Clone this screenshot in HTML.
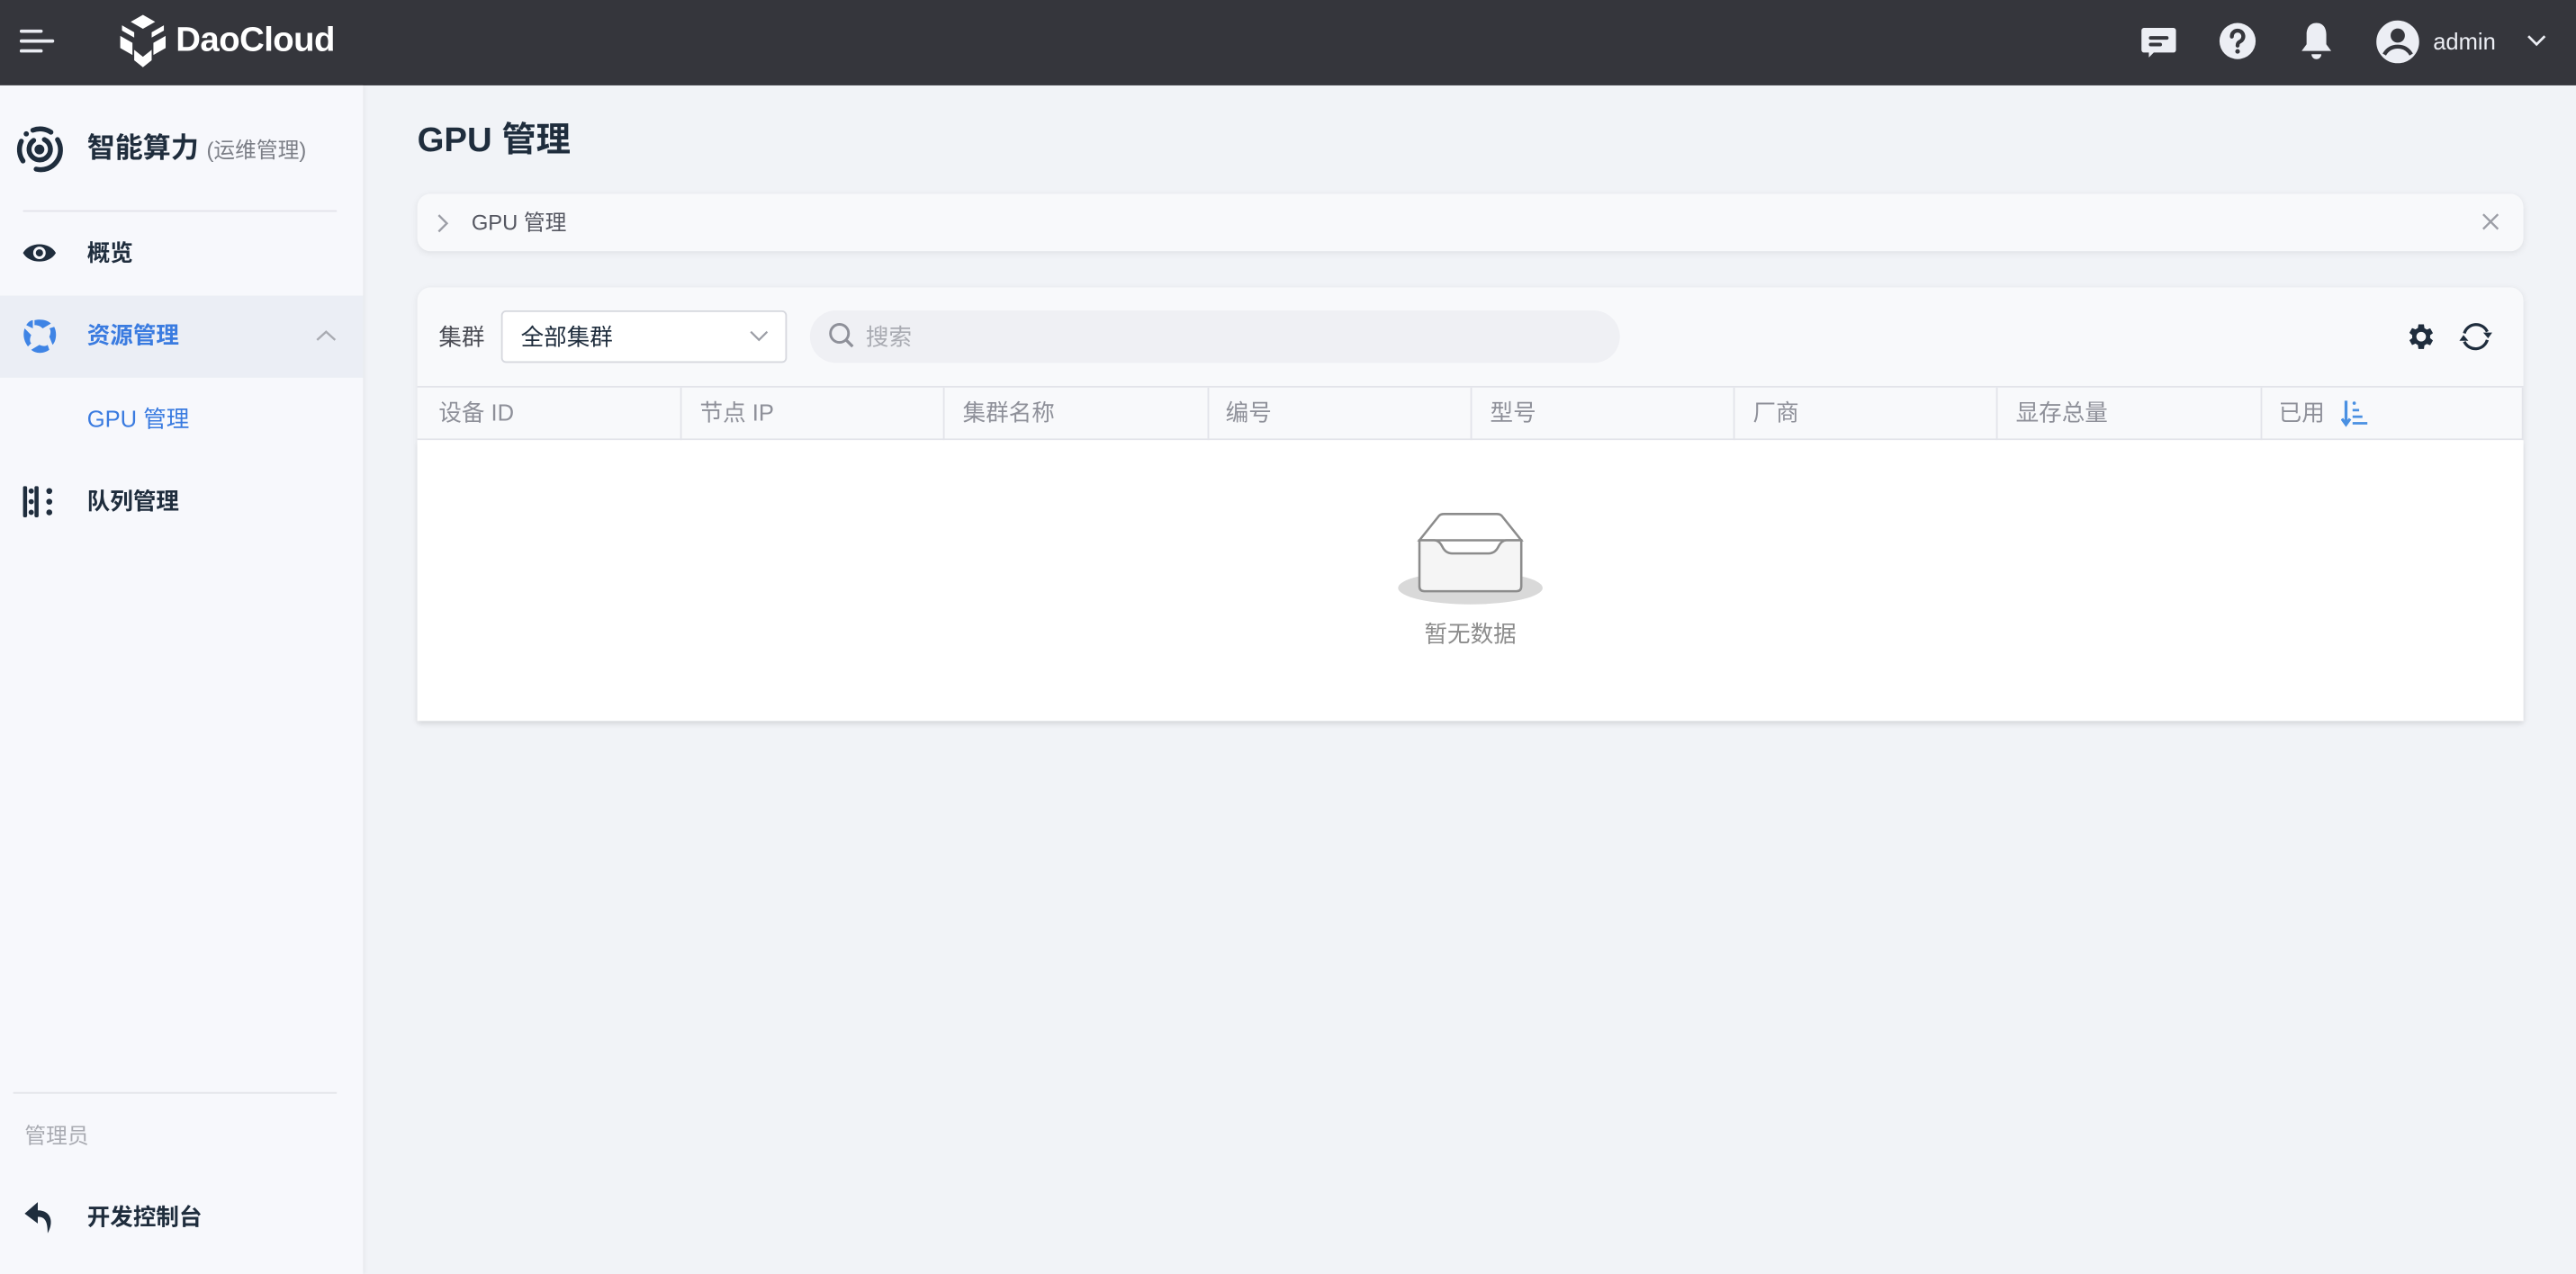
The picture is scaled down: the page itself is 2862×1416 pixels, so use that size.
<!DOCTYPE html>
<html><head><meta charset="utf-8"><style>
*{box-sizing:border-box;margin:0;padding:0}
html,body{width:2862px;height:1416px;overflow:hidden;background:#f1f3f7}
#w{width:1568px;height:776px;transform:scale(1.82526);transform-origin:0 0;position:relative;font-family:"Liberation Sans","Noto Sans CJK SC",sans-serif;background:#f1f3f7}
.a{position:absolute}
.hd{left:0;top:0;width:1568px;height:52px;background:#35363c}
.sb{left:0;top:52px;width:221px;height:724px;background:#f7f8fc;box-shadow:1px 0 3px rgba(0,0,0,.06)}
.t{white-space:nowrap;line-height:1;margin-top:1px}
.nav{font-size:14px;font-weight:bold;color:#1f2d3d}
.card{background:#f8f9fb;border-radius:8px;box-shadow:0 1px 4px rgba(0,0,0,.08)}
.th{font-size:14px;color:#8e9099;top:243px}
.cl{top:236px;width:1px;height:32px;background:#e3e4ea}
</style></head><body><div id="w">
<div class="a hd">
 <svg class="a" style="left:12px;top:16px" width="22" height="18"><rect x="0" y="2" width="14" height="2" rx="1" fill="#eaecf2"/><rect x="0" y="8" width="21" height="2" rx="1" fill="#eaecf2"/><rect x="0" y="14" width="14" height="2" rx="1" fill="#eaecf2"/></svg>
 <svg class="a" style="left:70px;top:8px" width="34" height="34" viewBox="0 0 32 32"><path d="M16 1 L23 5 L16 9 L9 5Z" fill="#fff"/><path d="M4 7 L11 11 L11 14 L4 10Z M28 7 L21 11 L21 14 L28 10Z" fill="#fff"/><path d="M3 13 L10 17 L10 24 L3 20Z M29 13 L22 17 L22 24 L29 20Z" fill="#fff"/><path d="M11 21 L16 25 L21 21 L21 27 L16 31 L11 27Z" fill="#fff"/></svg>
 <div class="a t" style="left:107px;top:13px;font-size:21px;font-weight:bold;color:#fff;letter-spacing:-0.3px">DaoCloud</div>
 <svg class="a" style="left:1302px;top:14px" width="24" height="24" viewBox="0 0 24 24"><path d="M3 3 h18 a1.5 1.5 0 0 1 1.5 1.5 v12 a1.5 1.5 0 0 1 -1.5 1.5 h-12 l-3 3 v-3 h-3 a1.5 1.5 0 0 1 -1.5 -1.5 v-12 A1.5 1.5 0 0 1 3 3Z" fill="#eceef4"/><rect x="6" y="8" width="12" height="2.2" rx="1.1" fill="#35363c"/><rect x="6" y="12" width="8" height="2.2" rx="1.1" fill="#35363c"/></svg>
 <svg class="a" style="left:1350px;top:13px" width="24" height="24" viewBox="0 0 24 24"><circle cx="12" cy="12" r="11" fill="#eceef4"/><path d="M8.5 9.3 a3.5 3.5 0 1 1 5 3 c-1.2.6-1.5 1.2-1.5 2.5" stroke="#35363c" stroke-width="2.4" fill="none" stroke-linecap="round"/><circle cx="12" cy="18.3" r="1.4" fill="#35363c"/></svg>
 <svg class="a" style="left:1398px;top:13px" width="24" height="26" viewBox="0 0 24 26"><path d="M12 1 c-4 0-6 3-6 7 v6 l-3 4 h18 l-3-4 v-6 c0-4-2-7-6-7Z" fill="#eceef4"/><path d="M9 20 h6 a3 3 0 0 1 -6 0Z" fill="#eceef4"/></svg>
 <svg class="a" style="left:1446px;top:12px" width="27" height="27" viewBox="0 0 28 28"><circle cx="14" cy="14" r="12.5" fill="none" stroke="#eceef4" stroke-width="2"/><circle cx="14" cy="14" r="12" fill="#eceef4"/><circle cx="14" cy="10" r="4.5" fill="#35363c"/><path d="M5.5 22 c2-3.5 5-5 8.5-5 s6.5 1.5 8.5 5" stroke="#35363c" stroke-width="2.5" fill="none"/></svg>
 <div class="a t" style="left:1481px;top:17px;font-size:14px;color:#eceef4">admin</div>
 <svg class="a" style="left:1538px;top:20px" width="12" height="9"><path d="M1 2 L6 7 L11 2" stroke="#eceef4" stroke-width="1.5" fill="none"/></svg>
</div>
<div class="a sb"></div>
<svg class="a" style="left:9px;top:76px" width="30" height="30" viewBox="0 0 30 30"><g fill="none" stroke="#1f2d3d" stroke-width="3" stroke-linecap="round"><path d="M11 3.3 A12 12 0 0 1 22 4.5"/><path d="M26 9 A12 12 0 0 1 13 27"/><path d="M5 22 A12 12 0 0 1 4 10"/><path d="M18 9 A6.5 6.5 0 1 1 11.5 9.5"/></g><circle cx="7" cy="5.5" r="1.6" fill="#1f2d3d"/><circle cx="15" cy="15" r="3" fill="#1f2d3d"/></svg>
<div class="a t" style="left:53px;top:81px;font-size:17px;font-weight:bold;color:#1f2d3d">智能算力 <span style="font-size:13px;font-weight:normal;color:#7b7e86">(运维管理)</span></div>
<div class="a" style="left:14px;top:128px;width:191px;height:1px;background:#e3e4ea"></div>
<svg class="a" style="left:13px;top:147px" width="22" height="14" viewBox="0 0 22 14"><path d="M1 7 C5 0 17 0 21 7 C17 14 5 14 1 7Z" fill="#1f2d3d"/><circle cx="11" cy="7" r="3.8" fill="#f7f8fc"/><circle cx="11" cy="7" r="2.2" fill="#1f2d3d"/></svg>
<div class="a t nav" style="left:53px;top:146px">概览</div>
<div class="a" style="left:0;top:180px;width:221px;height:50px;background:#ebeef5"></div>
<svg class="a" style="left:13px;top:194px" width="22" height="22" viewBox="0 0 22 22"><g fill="#3f84e5"><path d="M8 1 C12 0 16 1 18 3 L13 6 C11 4 9 4 8 4Z"/><path d="M20 5 C22 9 21 14 19 16 L17 11 C18 9 18 7 17 6Z"/><path d="M17 19 C13 22 8 21 6 19 L11 16 C13 17 15 17 16 16Z"/><path d="M4 17 C1 13 1 9 2 6 L6 10 C5 12 5 14 6 15Z"/><path d="M3 4 C4 2 6 1 7 1 L7 6 Z"/></g></svg>
<div class="a t nav" style="left:53px;top:196px;color:#3a7be0">资源管理</div>
<svg class="a" style="left:192px;top:200px" width="13" height="9"><path d="M1 7 L6.5 2 L12 7" stroke="#a9abb2" stroke-width="1.3" fill="none"/></svg>
<div class="a t" style="left:53px;top:247px;font-size:14px;color:#3a7be0">GPU 管理</div>
<svg class="a" style="left:14px;top:296px" width="20" height="19"><rect x="0" y="0" width="2.5" height="19" rx="1" fill="#1f2d3d"/><rect x="7" y="0" width="2.5" height="19" rx="1" fill="#1f2d3d"/><circle cx="5" cy="3" r="1.6" fill="#1f2d3d"/><circle cx="5" cy="9.5" r="1.6" fill="#1f2d3d"/><circle cx="5" cy="16" r="1.6" fill="#1f2d3d"/><circle cx="16" cy="3" r="1.8" fill="#1f2d3d"/><circle cx="16" cy="9.5" r="1.8" fill="#1f2d3d"/><circle cx="16" cy="16" r="1.8" fill="#1f2d3d"/></svg>
<div class="a t nav" style="left:53px;top:297px">队列管理</div>
<div class="a" style="left:8px;top:665px;width:197px;height:1px;background:#e3e4ea"></div>
<div class="a t" style="left:15px;top:684px;font-size:13px;color:#a9abb2">管理员</div>
<svg class="a" style="left:14px;top:731px" width="20" height="21" viewBox="0 0 20 21"><path d="M9 1 L1 8 L9 14 V10 C13 10 15 12 15 20 C19 13 17 6 9 6Z" fill="#1f2d3d"/></svg>
<div class="a t nav" style="left:53px;top:733px">开发控制台</div>

<div class="a t" style="left:254px;top:74px;font-size:21px;font-weight:bold;color:#1f2d3d">GPU 管理</div>
<div class="a card" style="left:254px;top:118px;width:1282px;height:35px"></div>
<svg class="a" style="left:265px;top:130px" width="9" height="12"><path d="M2 1 L7 6 L2 11" stroke="#9c9ea6" stroke-width="1.3" fill="none"/></svg>
<div class="a t" style="left:287px;top:128px;font-size:13px;color:#545660">GPU 管理</div>
<svg class="a" style="left:1510px;top:129px" width="12" height="12"><path d="M1.5 1.5 L10.5 10.5 M10.5 1.5 L1.5 10.5" stroke="#9c9ea6" stroke-width="1.3"/></svg>

<div class="a card" style="left:254px;top:175px;width:1282px;height:264px;border-radius:8px 8px 0 0"></div>
<div class="a t" style="left:267px;top:197px;font-size:14px;color:#4b4d55">集群</div>
<div class="a" style="left:305px;top:189px;width:174px;height:32px;background:#fff;border:1px solid #d6d8de;border-radius:3px"></div>
<div class="a t" style="left:317px;top:197px;font-size:14px;color:#1f2d3d">全部集群</div>
<svg class="a" style="left:456px;top:200px" width="12" height="9"><path d="M1 2 L6 7 L11 2" stroke="#9c9ea6" stroke-width="1.2" fill="none"/></svg>
<div class="a" style="left:493px;top:189px;width:493px;height:32px;background:#eff0f4;border-radius:16px"></div>
<svg class="a" style="left:504px;top:196px" width="17" height="17"><circle cx="7" cy="7" r="5.5" stroke="#8e9099" stroke-width="1.6" fill="none"/><path d="M11 11 L15 15" stroke="#8e9099" stroke-width="1.8"/></svg>
<div class="a t" style="left:527px;top:197px;font-size:14px;color:#a9abb2">搜索</div>
<svg class="a" style="left:1463px;top:195px" width="20" height="20" viewBox="0 0 24 24"><path fill="#1f2d3d" d="M19.4 13a7.5 7.5 0 0 0 0-2l2.1-1.6-2-3.5-2.5 1a7.6 7.6 0 0 0-1.7-1L14.9 3h-4l-.4 2.7a7.6 7.6 0 0 0-1.7 1l-2.5-1-2 3.5L6.4 11a7.5 7.5 0 0 0 0 2l-2.1 1.6 2 3.5 2.5-1a7.6 7.6 0 0 0 1.7 1l.4 2.900h4l.4-2.7a7.6 7.6 0 0 0 1.7-1l2.5 1 2-3.5ZM12.9 15.5a3.5 3.5 0 1 1 0-7 3.5 3.5 0 0 1 0 7Z"/><circle cx="12.9" cy="12" r="2" fill="#f8f9fb"/></svg>
<svg class="a" style="left:1496px;top:194px" width="22" height="22" viewBox="0 0 22 22"><g fill="none" stroke="#1f2d3d" stroke-width="1.8"><path d="M4 9 A7.5 7.5 0 0 1 18 8"/><path d="M18 13 A7.5 7.5 0 0 1 4 14"/></g><path d="M15.5 8.5 L21 8.5 L18.5 12Z" fill="#1f2d3d"/><path d="M1 13.5 L6.5 13.5 L3.5 10Z" fill="#1f2d3d"/></svg>
<div class="a" style="left:254px;top:235px;width:1282px;height:1px;background:#e3e4ea"></div>
<div class="a" style="left:254px;top:267px;width:1282px;height:1px;background:#e3e4ea"></div>
<div class="a" style="left:254px;top:268px;width:1282px;height:171px;background:#fff;box-shadow:0 2px 3px rgba(0,0,0,.06)"></div>
<div class="a cl" style="left:414px"></div><div class="a cl" style="left:574px"></div><div class="a cl" style="left:735px"></div><div class="a cl" style="left:895px"></div><div class="a cl" style="left:1055px"></div><div class="a cl" style="left:1215px"></div><div class="a cl" style="left:1376px"></div><div class="a cl" style="left:1535px"></div>
<div class="a t th" style="left:267px">设备 ID</div>
<div class="a t th" style="left:426px">节点 IP</div>
<div class="a t th" style="left:586px">集群名称</div>
<div class="a t th" style="left:746px">编号</div>
<div class="a t th" style="left:907px">型号</div>
<div class="a t th" style="left:1067px">厂商</div>
<div class="a t th" style="left:1227px">显存总量</div>
<div class="a t th" style="left:1387px">已用</div>
<svg class="a" style="left:1425px;top:243px" width="18" height="17"><path d="M3 1 V15 M0.5 12 L3 15.5 L5.5 12" stroke="#4a90e2" stroke-width="1.8" fill="none"/><circle cx="8" cy="2.5" r="1" fill="#4a90e2"/><rect x="7" y="6" width="4" height="1.5" fill="#4a90e2"/><rect x="7" y="10" width="6" height="1.5" fill="#4a90e2"/><rect x="7" y="14" width="9" height="1.5" fill="#4a90e2"/></svg>
<svg class="a" style="left:850px;top:310px" width="90" height="60" viewBox="0 0 90 60"><ellipse cx="45" cy="48" rx="44" ry="10" fill="#d9d9d9"/><path d="M14 19 L26 4 Q27 3 29 3 H61 Q63 3 64 4 L76 19Z" fill="#fff" stroke="#8c8c8c" stroke-width="1.4"/><path d="M14 19 H23 Q26 19 28 23 Q30 27 34 27 H56 Q60 27 62 23 Q64 19 67 19 H76 V47 Q76 50 73 50 H17 Q14 50 14 47Z" fill="#f5f5f5" stroke="#8c8c8c" stroke-width="1.4"/></svg>
<div class="a t" style="left:867px;top:378px;font-size:14px;color:#8c8c8c">暂无数据</div>
</div></body></html>
